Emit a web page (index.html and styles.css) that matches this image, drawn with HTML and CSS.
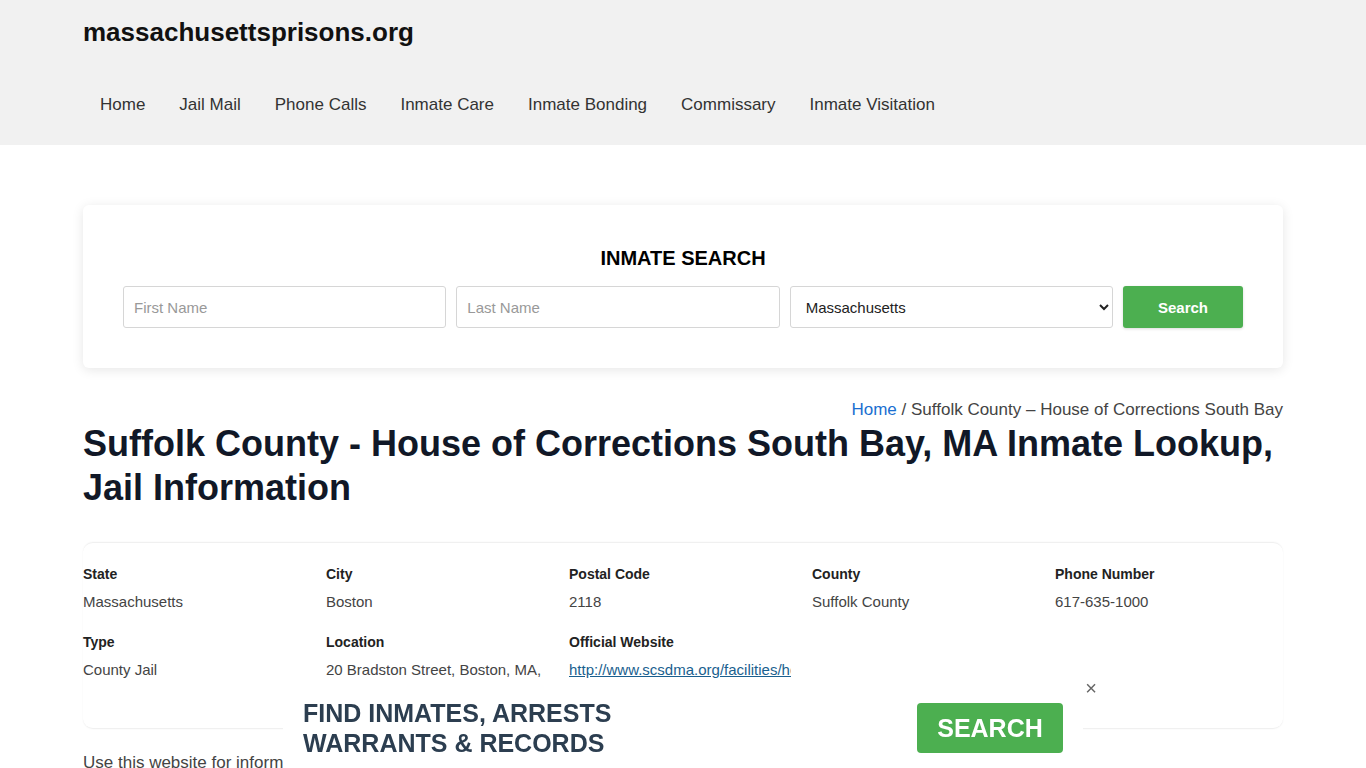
FILE: index.html
```html
<!DOCTYPE html>
<html lang="en">
<head>
<meta charset="utf-8">
<title>Suffolk County - House of Corrections South Bay, MA Inmate Lookup</title>
<link rel="stylesheet" href="styles.css">
</head>
<body>
<header class="site-header">
  <div class="container">
    <div class="logo">massachusettsprisons.org</div>
    <nav class="nav">
      <a href="#">Home</a>
      <a href="#">Jail Mail</a>
      <a href="#">Phone Calls</a>
      <a href="#">Inmate Care</a>
      <a href="#">Inmate Bonding</a>
      <a href="#">Commissary</a>
      <a href="#">Inmate Visitation</a>
    </nav>
  </div>
</header>

<main class="container">
  <section class="search-card">
    <h2 class="search-title">INMATE SEARCH</h2>
    <form class="search-form">
      <input type="text" placeholder="First Name">
      <input type="text" placeholder="Last Name">
      <select><option>Massachusetts</option></select>
      <button type="button">Search</button>
    </form>
  </section>

  <div class="breadcrumb"><a href="#">Home</a> / Suffolk County – House of Corrections South Bay</div>
  <h1 class="page-title">Suffolk County - House of Corrections South Bay, MA Inmate Lookup, Jail Information</h1>

  <section class="info-card">
    <div class="info-item"><div class="label">State</div><div class="value">Massachusetts</div></div>
    <div class="info-item"><div class="label">City</div><div class="value">Boston</div></div>
    <div class="info-item"><div class="label">Postal Code</div><div class="value">2118</div></div>
    <div class="info-item"><div class="label">County</div><div class="value">Suffolk County</div></div>
    <div class="info-item"><div class="label">Phone Number</div><div class="value">617-635-1000</div></div>
    <div class="info-item"><div class="label">Type</div><div class="value">County Jail</div></div>
    <div class="info-item"><div class="label">Location</div><div class="value">20 Bradston Street, Boston, MA, 02118</div></div>
    <div class="info-item"><div class="label">Official Website</div><div class="value nowrap"><a href="#">http://www.scsdma.org/facilities/house-of-correction/</a></div></div>
  </section>

  <p class="intro">Use this website for informational purposes only.</p>
</main>

<div class="promo">
  <div class="promo-text">FIND INMATES, ARRESTS<br>WARRANTS &amp; RECORDS</div>
  <a class="promo-btn" href="#">SEARCH</a>
  <span class="promo-close">×</span>
</div>
</body>
</html>
```

FILE: styles.css
```css
* { box-sizing: border-box; }
html, body { margin: 0; padding: 0; }
body {
  font-family: "Liberation Sans", Arial, sans-serif;
  color: #444;
  background: #fff;
  overflow: hidden;
}
.container { width: 1200px; margin: 0 auto; }

.site-header { background: #f1f1f1; padding: 16px 0 30px; }
.logo {
  font-size: 26px; font-weight: bold; line-height: 32px; color: #111;
}
.nav { display: flex; margin-top: 47px; }
.nav a {
  font-size: 17px; line-height: 20px; padding: 0 17px; color: #333; text-decoration: none;
}

.search-card {
  margin-top: 60px;
  background: #fff;
  border-radius: 6px;
  box-shadow: 0 2px 12px rgba(0,0,0,0.10);
  padding: 41px 40px 40px;
  text-align: center;
}
.search-title {
  margin: 0 0 16px; font-size: 20px; line-height: 24px; color: #000; font-weight: bold;
}
.search-form {
  display: grid; grid-template-columns: 1fr 1fr 1fr 120px; gap: 10px;
}
.search-form input, .search-form select {
  height: 42px; border: 1px solid #d6d6d6; border-radius: 3px;
  font-family: "Liberation Sans", Arial, sans-serif; font-size: 15px; padding: 0 10px;
  color: #222; background: #fff;
}
.search-form input::placeholder { color: #999; }
.search-form select { padding-left: 11px; }
.search-form button {
  height: 42px; background: #4caf50; color: #fff; border: none; border-radius: 3px;
  font-family: "Liberation Sans", Arial, sans-serif; font-size: 15px; font-weight: bold;
  box-shadow: 0 1px 3px rgba(0,0,0,0.15);
}

.breadcrumb {
  margin-top: 30px; text-align: right; font-size: 17px; line-height: 24px; color: #444;
}
.breadcrumb a { color: #1a6fd1; text-decoration: none; }

.page-title {
  margin: 0; font-size: 36px; line-height: 44px; color: #111827; font-weight: bold;
}

.info-card {
  margin-top: 32px;
  border-radius: 10px;
  box-shadow: 0 0 2px rgba(0,0,0,0.05);
  border-top: 1px solid #f0f0f0;
  border-bottom: 1px solid #f0f0f0;
  padding: 21px 0 28px;
  display: grid;
  grid-template-columns: repeat(5, 228px);
  column-gap: 15px;
  row-gap: 20px;
}
.label { font-size: 14px; line-height: 20px; font-weight: bold; color: #222; margin-bottom: 8px; }
.value { font-size: 15px; line-height: 20px; color: #444; max-width: 222px; overflow: hidden; }
.value.nowrap { white-space: nowrap; }
.value a { color: #1a5f8f; text-decoration: underline; }

.intro { margin: 22px 0 0; font-size: 17px; line-height: 24px; color: #444; }

.promo {
  position: fixed;
  left: 283px; bottom: 0;
  width: 800px; height: 86px;
  background: #fff;
  display: flex; align-items: flex-start; justify-content: space-between;
  padding: 16px 20px 0;
}
.promo-text {
  font-size: 25px; line-height: 30px; font-weight: bold; color: #2c3e50;
}
.promo-btn {
  margin-top: 5px;
  width: 146px; height: 50px; line-height: 50px; text-align: center;
  background: #4caf50; color: #fff; font-size: 25px; font-weight: bold;
  border-radius: 4px; text-decoration: none;
}
.promo-close {
  position: absolute; right: -14px; top: -4px;
  font-size: 20px; line-height: 20px; color: #666;
}
```
